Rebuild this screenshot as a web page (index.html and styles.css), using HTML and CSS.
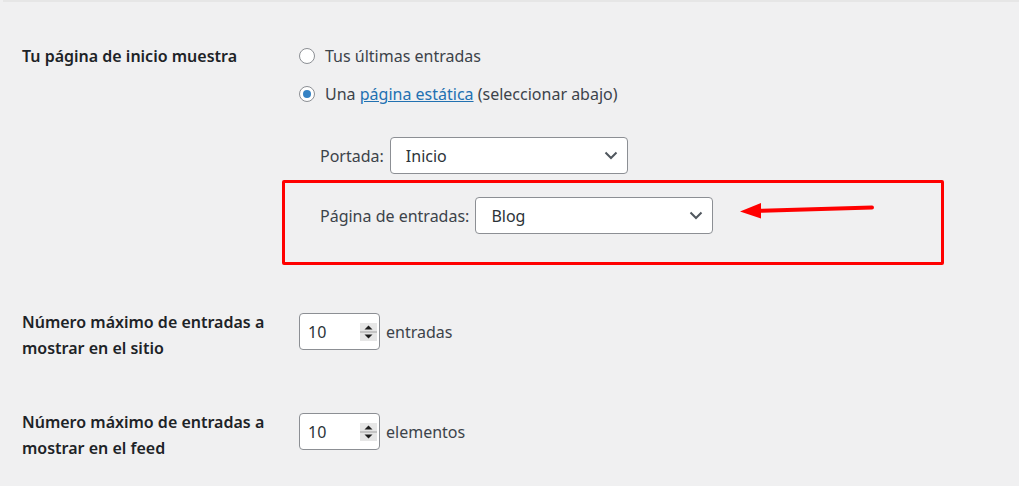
FILE: index.html
```html
<html>
<head>
<title>Ajustes de lectura</title>
<link rel="stylesheet" href="styles.css">
</head>
<body>
<div class="top_edge"></div>
<div class="form_wrap">

    <div class="row row_front">
	<div class="row_label">Tu página de inicio muestra</div>
	<div class="row_field">
	    <div class="radio_line">
		<span class="radio"></span>
		Tus últimas entradas
	    </div>
	    <div class="radio_line">
		<span class="radio checked"></span>
		Una&nbsp;<a href="#">página estática</a>&nbsp;(seleccionar abajo)
	    </div>

	    <div class="sub_line">
		<span class="sub_label">Portada:</span>
		<div class="select_box">
		    <span>Inicio</span>
		    <svg width="14" height="9" viewBox="0 0 14 9"><path d="M1.5 1.5 L7 7 L12.5 1.5" fill="none" stroke="#50575e" stroke-width="2"/></svg>
		</div>
	    </div>

	    <div class="highlight">
		<div class="sub_line">
		    <span class="sub_label">Página de entradas:</span>
		    <div class="select_box">
			<span>Blog</span>
			<svg width="14" height="9" viewBox="0 0 14 9"><path d="M1.5 1.5 L7 7 L12.5 1.5" fill="none" stroke="#50575e" stroke-width="2"/></svg>
		    </div>
		</div>
		<!-- arrow pointing at the posts page select -->
		<svg class="arrow" width="140" height="20" viewBox="0 0 140 20">
		    <path d="M20 9.8 L132 6.5" stroke="#ff0000" stroke-width="4" stroke-linecap="round"/>
		    <path d="M0 10.5 L21 2 L21 17.5 Z" fill="#ff0000"/>
		</svg>
	    </div>
	</div>
    </div>

    <div class="row row_posts">
	<div class="row_label">Número máximo de entradas a mostrar en el sitio</div>
	<div class="row_field inline_field">
	    <div class="number_box">
		<span>10</span>
		<svg class="spin" width="17" height="18" viewBox="0 0 17 18"><rect x="0" y="0" width="17" height="18" fill="#e6e6e6"/><rect x="0" y="8.5" width="17" height="1" fill="#a0a0a0"/><path d="M4.5 6.5 L8.5 2.5 L12.5 6.5 Z" fill="#1d1d1d"/><path d="M4.5 11.5 L8.5 15.5 L12.5 11.5 Z" fill="#1d1d1d"/></svg>
	    </div>
	    <span class="unit">entradas</span>
	</div>
    </div>

    <div class="row row_feed">
	<div class="row_label">Número máximo de entradas a mostrar en el feed</div>
	<div class="row_field inline_field">
	    <div class="number_box">
		<span>10</span>
		<svg class="spin" width="17" height="18" viewBox="0 0 17 18"><rect x="0" y="0" width="17" height="18" fill="#e6e6e6"/><rect x="0" y="8.5" width="17" height="1" fill="#a0a0a0"/><path d="M4.5 6.5 L8.5 2.5 L12.5 6.5 Z" fill="#1d1d1d"/><path d="M4.5 11.5 L8.5 15.5 L12.5 11.5 Z" fill="#1d1d1d"/></svg>
	    </div>
	    <span class="unit">elementos</span>
	</div>
    </div>

</div>
</body>
</html>
```

FILE: styles.css
```css
body {
    font-family: "Noto Sans", "Open Sans", sans-serif;
    font-size: 16px;
    color: #3c434a;
    background-color: #f0f0f1;
    margin: 0;
}

a {
    color: #2271b1;
    text-decoration: underline;
}

.top_edge {
    height: 2px;
    margin-left: 3px;
    background-color: #e6e6e6;
}

.form_wrap {
    padding-left: 22px;
}

.row {
    display: flex;
}
.row_label {
    width: 277px;
    flex: none;
    color: #1d2327;
    font-weight: 600;
    line-height: 26px;
    padding-right: 16px;
    box-sizing: border-box;
}
.row_front {
    padding-top: 40px;
}
.row_front > .row_label {
    padding-top: 1px;
}
.row_posts {
    padding-top: 44px;
}
.row_feed {
    padding-top: 48px;
}

.radio_line {
    display: flex;
    align-items: center;
    height: 28px;
    margin-bottom: 10px;
    line-height: 28px;
    white-space: nowrap;
}
.radio {
    width: 14px;
    height: 14px;
    border: 1px solid #8c8f94;
    border-radius: 50%;
    background-color: #ffffff;
    margin-right: 10px;
    position: relative;
    flex: none;
}
.radio.checked::after {
    content: "";
    position: absolute;
    left: 3px;
    top: 3px;
    width: 8px;
    height: 8px;
    border-radius: 50%;
    background-color: #3582c4;
}

.sub_line {
    display: flex;
    align-items: center;
    padding-left: 21px;
}
.row_field > .sub_line {
    margin-top: 29px;
}
.sub_label {
    margin-right: 6px;
}

.select_box {
    width: 238px;
    height: 37px;
    box-sizing: border-box;
    border: 1px solid #8c8f94;
    border-radius: 4px;
    background-color: #ffffff;
    color: #2c3338;
    font-size: 16px;
    display: flex;
    align-items: center;
    justify-content: space-between;
    padding: 0 9px 0 15px;
}

.highlight {
    position: relative;
    margin-left: -17px;
    margin-top: 6px;
    width: 662px;
    height: 85px;
    box-sizing: border-box;
    border: 3px solid #ff0000;
    border-radius: 2px;
    padding-top: 14px;
    padding-left: 14px;
}
.arrow {
    position: absolute;
    left: 455px;
    top: 18px;
}

.inline_field {
    display: flex;
    align-items: center;
    height: 37px;
    margin-top: 4px;
}
.number_box {
    width: 81px;
    height: 37px;
    box-sizing: border-box;
    border: 1px solid #8c8f94;
    border-radius: 4px;
    background-color: #ffffff;
    color: #2c3338;
    font-size: 16px;
    display: flex;
    align-items: center;
    justify-content: space-between;
    padding: 0 2px 0 8px;
}
.unit {
    margin-left: 6px;
}
```
